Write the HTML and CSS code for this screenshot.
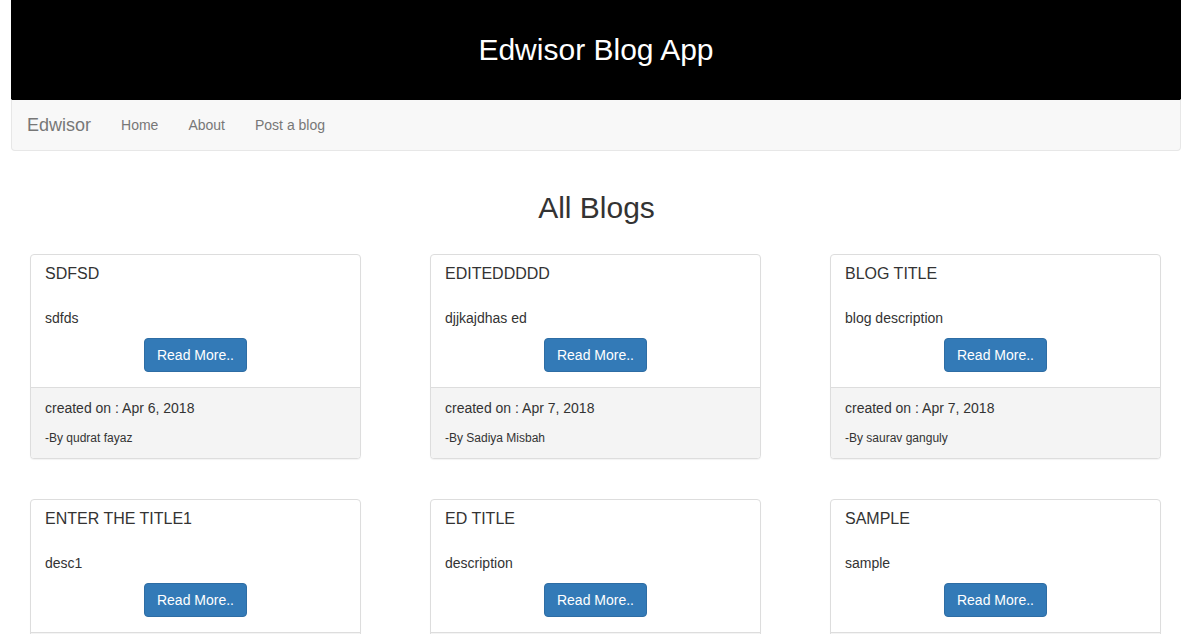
FILE: index.html
```html
<!DOCTYPE html>
<html>
<head>
<meta charset="utf-8">
<title>Edwisor Blog App</title>
<link rel="stylesheet" href="styles.css">
</head>
<body>
<div class="wrap">
  <header class="banner"><h1 class="banner-title">Edwisor Blog App</h1></header>
  <nav class="navbar">
    <a class="brand" href="#">Edwisor</a>
    <a class="nav-link" href="#">Home</a>
    <a class="nav-link" href="#">About</a>
    <a class="nav-link" href="#">Post a blog</a>
  </nav>
</div>
<h2 class="page-title">All Blogs</h2>
<main class="grid">
  <div class="card">
    <div class="card-head"><h3 class="card-title">SDFSD</h3></div>
    <div class="card-body"><p class="desc">sdfds</p><div class="btn-row"><a class="btn" href="#">Read More..</a></div></div>
    <div class="card-foot"><p class="created">created on : Apr 6, 2018</p><small class="author">-By qudrat fayaz</small></div>
  </div>
  <div class="card">
    <div class="card-head"><h3 class="card-title">EDITEDDDDD</h3></div>
    <div class="card-body"><p class="desc">djjkajdhas ed</p><div class="btn-row"><a class="btn" href="#">Read More..</a></div></div>
    <div class="card-foot"><p class="created">created on : Apr 7, 2018</p><small class="author">-By Sadiya Misbah</small></div>
  </div>
  <div class="card">
    <div class="card-head"><h3 class="card-title">BLOG TITLE</h3></div>
    <div class="card-body"><p class="desc">blog description</p><div class="btn-row"><a class="btn" href="#">Read More..</a></div></div>
    <div class="card-foot"><p class="created">created on : Apr 7, 2018</p><small class="author">-By saurav ganguly</small></div>
  </div>
  <div class="card">
    <div class="card-head"><h3 class="card-title">ENTER THE TITLE1</h3></div>
    <div class="card-body"><p class="desc">desc1</p><div class="btn-row"><a class="btn" href="#">Read More..</a></div></div>
    <div class="card-foot"><p class="created">created on : Apr 7, 2018</p><small class="author">-By Sadiya Misbah</small></div>
  </div>
  <div class="card">
    <div class="card-head"><h3 class="card-title">ED TITLE</h3></div>
    <div class="card-body"><p class="desc">description</p><div class="btn-row"><a class="btn" href="#">Read More..</a></div></div>
    <div class="card-foot"><p class="created">created on : Apr 7, 2018</p><small class="author">-By Sadiya Misbah</small></div>
  </div>
  <div class="card">
    <div class="card-head"><h3 class="card-title">SAMPLE</h3></div>
    <div class="card-body"><p class="desc">sample</p><div class="btn-row"><a class="btn" href="#">Read More..</a></div></div>
    <div class="card-foot"><p class="created">created on : Apr 7, 2018</p><small class="author">-By saurav ganguly</small></div>
  </div>
</main>
</body>
</html>
```
FILE: styles.css
```css
html, body {
  margin: 0;
  padding: 0;
  background: #fff;
  color: #333;
  font-family: "Liberation Sans", Arial, sans-serif;
  font-size: 14px;
  line-height: 20px;
}
.wrap {
  width: 1170px;
  margin: 0 0 0 11px;
}
.banner {
  height: 99px;
  background: #000;
  display: flex;
  align-items: center;
  justify-content: center;
}
.banner-title {
  margin: 0;
  color: #fff;
  font-size: 30px;
  font-weight: normal;
  line-height: 33px;
}
.navbar {
  height: 50px;
  background: #f8f8f8;
  border: 1px solid #e7e7e7;
  border-top: 1px solid #000;
  border-radius: 0 0 4px 4px;
  display: flex;
  align-items: center;
}
.brand {
  padding: 0 15px;
  font-size: 18px;
  color: #777;
  text-decoration: none;
  line-height: 50px;
}
.nav-link {
  padding: 0 15px;
  color: #777;
  text-decoration: none;
  line-height: 50px;
}
.page-title {
  margin: 40px 0 30px;
  text-align: center;
  font-size: 30px;
  font-weight: normal;
  line-height: 33px;
  color: #333;
}
.grid {
  display: grid;
  grid-template-columns: repeat(3, 331px);
  column-gap: 69px;
  row-gap: 40px;
  margin-left: 30px;
}
.card {
  border: 1px solid #ddd;
  border-radius: 4px;
  box-shadow: 0 1px 1px rgba(0,0,0,.05);
  background: #fff;
}
.card-head {
  padding: 10px 15px 10px 14px;
}
.card-title {
  margin: 0;
  font-size: 16px;
  font-weight: normal;
  line-height: 18px;
  color: #333;
}
.card-body {
  padding: 15px 15px 15px 14px;
}
.desc {
  margin: 0 0 10px;
}
.btn-row {
  display: flex;
  justify-content: center;
  padding-left: 1px;
}
.btn {
  display: inline-block;
  padding: 6px 12px;
  background: #337ab7;
  border: 1px solid #2e6da4;
  border-radius: 4px;
  color: #fff;
  text-decoration: none;
  font-size: 14px;
  line-height: 20px;
}
.card-foot {
  padding: 10px 15px 10px 14px;
  background: #f4f4f4;
  border-top: 1px solid #ddd;
  border-radius: 0 0 3px 3px;
}
.created {
  margin: 0 0 10px;
}
.author {
  display: block;
  font-size: 12px;
  line-height: 20px;
}
```
